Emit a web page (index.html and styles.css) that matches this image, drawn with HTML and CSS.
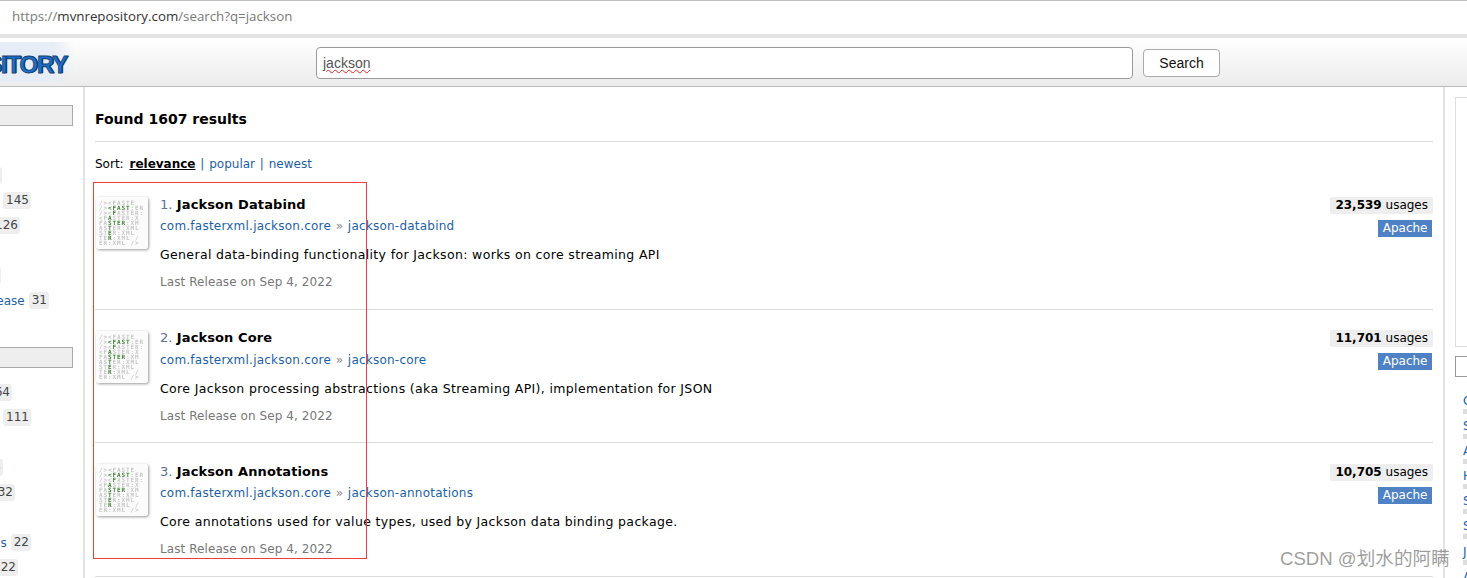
FILE: index.html
```html
<!DOCTYPE html>
<html lang="en">
<head>
<meta charset="utf-8">
<title>Search jackson</title>
<link rel="stylesheet" href="styles.css">
</head>
<body>
<svg class="defs" width="0" height="0" aria-hidden="true">
  <symbol id="fx" viewBox="0 0 52 52">
    <rect width="52" height="52" rx="3" fill="#fbfbfb"/>
    <g class="fx-text">
      <text x="3" y="8">  /&gt;&lt;FASTE</text>
      <text x="3" y="13">/&gt;<tspan class="fx-g">&lt;FAST</tspan>:ER</text>
      <text x="3" y="18">/&gt;&lt;<tspan class="fx-g">F</tspan>ASTER:</text>
      <text x="3" y="23"> &lt;F<tspan class="fx-g">A</tspan>STER:X</text>
      <text x="3" y="28"> FA<tspan class="fx-g">STER</tspan>:XM</text>
      <text x="3" y="33"> AS<tspan class="fx-g">T</tspan>ER:XML</text>
      <text x="3" y="38"> ST<tspan class="fx-g">E</tspan>R:XML</text>
      <text x="3" y="43"> TE<tspan class="fx-g">R</tspan>:XML /</text>
      <text x="3" y="48"> ER:XML /&gt;</text>
    </g>
  </symbol>
</svg>
<div class="urlbar"><span class="url-dim">https://</span><span class="url-host">mvnrepository.com</span><span class="url-dim">/search?q=jackson</span></div>
<header class="top">
  <div class="logo-wrap"><div class="logo-bg"><span class="logo">REPOSITORY</span></div></div>
  <div class="search">
    <div class="search-input"><span class="typo">jackson</span></div>
    <button class="search-btn" type="button">Search</button>
  </div>
</header>
<div class="page">
  <aside class="left">
    <div class="facet-head"></div>
    <div class="facet-rows">
      <div class="frow"></div>
      <div class="frow e2"><span class="badge"></span></div>
      <div class="frow e31"><span class="badge">145</span></div>
      <div class="frow e20"><span class="badge">126</span></div>
      <div class="frow"></div>
      <div class="frow e1"><span class="badge"></span></div>
      <div class="frow e49"><a class="flink">Release</a><span class="badge">31</span></div>
    </div>
    <div class="facet-head second"></div>
    <div class="facet-rows">
      <div class="frow e12"><span class="badge">64</span></div>
      <div class="frow e31"><span class="badge">111</span></div>
      <div class="frow"></div>
      <div class="frow e3"><span class="badge">65</span></div>
      <div class="frow e15"><span class="badge">32</span></div>
      <div class="frow"></div>
      <div class="frow e31"><a class="flink">Tools</a><span class="badge">22</span></div>
      <div class="frow e18"><span class="badge">22</span></div>
    </div>
  </aside>
  <main class="main">
    <h2 class="found">Found 1607 results</h2>
    <div class="sort">Sort: <a class="active">relevance</a> <span class="pipe">|</span> <a>popular</a> <span class="pipe">|</span> <a>newest</a></div>
    <div class="result">
      <svg class="icon" width="52" height="52"><use href="#fx"/></svg>
      <div class="info">
        <div class="title"><span class="num">1.</span> <b>Jackson Databind</b></div>
        <div class="coords"><a>com.fasterxml.jackson.core</a> <span class="sep">»</span> <a>jackson-databind</a></div>
        <div class="desc">General data-binding functionality for Jackson: works on core streaming API</div>
        <div class="date">Last Release on Sep 4, 2022</div>
      </div>
      <div class="meta"><span class="usage"><b>23,539</b> usages</span><span class="lic">Apache</span></div>
    </div>
    <div class="result">
      <svg class="icon" width="52" height="52"><use href="#fx"/></svg>
      <div class="info">
        <div class="title"><span class="num">2.</span> <b>Jackson Core</b></div>
        <div class="coords"><a>com.fasterxml.jackson.core</a> <span class="sep">»</span> <a>jackson-core</a></div>
        <div class="desc">Core Jackson processing abstractions (aka Streaming API), implementation for JSON</div>
        <div class="date">Last Release on Sep 4, 2022</div>
      </div>
      <div class="meta"><span class="usage"><b>11,701</b> usages</span><span class="lic">Apache</span></div>
    </div>
    <div class="result">
      <svg class="icon" width="52" height="52"><use href="#fx"/></svg>
      <div class="info">
        <div class="title"><span class="num">3.</span> <b>Jackson Annotations</b></div>
        <div class="coords"><a>com.fasterxml.jackson.core</a> <span class="sep">»</span> <a>jackson-annotations</a></div>
        <div class="desc">Core annotations used for value types, used by Jackson data binding package.</div>
        <div class="date">Last Release on Sep 4, 2022</div>
      </div>
      <div class="meta"><span class="usage"><b>10,705</b> usages</span><span class="lic">Apache</span></div>
    </div>
  </main>
  <aside class="right">
    <div class="ad"></div>
    <div class="rinput"></div>
    <ul class="rlist">
      <li><a>Core</a><i></i></li>
      <li><a>Spring</a><i></i></li>
      <li><a>Apache</a><i></i></li>
      <li><a>HTTP</a><i></i></li>
      <li><a>SLF4J</a><i></i></li>
      <li><a>Scala</a><i></i></li>
      <li><a>Jersey</a><i></i></li>
      <li><a>AWS</a><i></i></li>
    </ul>
  </aside>
</div>
<div class="redbox"></div>
<div class="watermark">CSDN @划水的阿瞒</div>
</body>
</html>
```
FILE: styles.css
```css
* { box-sizing: border-box; }
html, body { margin: 0; padding: 0; }
body {
  width: 1467px;
  height: 578px;
  overflow: hidden;
  position: relative;
  background: #fff;
  font-family: "DejaVu Sans", sans-serif;
  font-size: 12px;
  color: #000;
}
.defs { position: absolute; }
a { color: #1d5fa8; text-decoration: none; }

.urlbar {
  height: 38px;
  padding: 8px 0 0 12px;
  border-top: 1px solid #e6e6e6;
  border-bottom: 4px solid;
  border-image: linear-gradient(#bdbdbd 0 50%, #e4e4e4 50%) 1;
  font-family: "Open Sans", "Liberation Sans", sans-serif;
  font-size: 13.3px;
  line-height: 15px;
}
.url-dim { color: #7a7a7a; }
.url-host { color: #333; }

.top {
  height: 49px;
  display: flex;
  background: linear-gradient(#ffffff, #ececec);
  border-bottom: 1px solid #bcbcbc;
}
.logo-wrap {
  width: 316px;
  height: 48px;
  flex: none;
  overflow: hidden;
}
.logo-bg {
  width: 75px;
  height: 40px;
  margin-top: 4px;
  overflow: hidden;
  display: flex;
  align-items: center;
  justify-content: flex-end;
  padding: 5px 8px 0 0;
  background: linear-gradient(90deg, #e6edf6 70%, rgba(236, 240, 246, 0));
}
.logo {
  flex: none;
  font-family: "Liberation Sans", sans-serif;
  font-weight: bold;
  font-size: 24px;
  line-height: 28px;
  letter-spacing: -1.2px;
  color: #1c6fd0;
  -webkit-text-stroke: 0.9px #17406f;
  text-shadow: 1px 0 #16375e;
}
.search { display: flex; align-items: flex-start; padding-top: 9px; }
.search-input {
  width: 817px;
  height: 32px;
  border: 1px solid #9a9a9a;
  border-radius: 4px;
  background: #fff;
  padding: 7px 6px;
  font-family: "Liberation Sans", sans-serif;
  font-size: 14px;
  line-height: 16px;
  color: #555;
}
.typo { text-decoration: underline wavy #e22 1px; text-underline-offset: 1px; }
.search-btn {
  margin: 2px 0 0 10px;
  width: 77px;
  height: 28px;
  padding: 0;
  border: 1px solid #aaa;
  border-radius: 4px;
  background: #fff;
  font-family: "Liberation Sans", sans-serif;
  font-size: 14px;
  color: #111;
}

.page { display: flex; height: 491px; }
.left {
  width: 85px;
  flex: none;
  padding-top: 18px;
  border-right: 2px solid #e3e3e3;
  overflow: hidden;
}
.facet-head {
  width: 73px;
  height: 21px;
  background: #eee;
  border: 1px solid #aaa;
  border-left: 0;
}
.facet-head.second { margin-top: 34px; }
.facet-rows { display: flex; flex-direction: column; padding-top: 12px; }
.frow {
  height: 25px;
  display: flex;
  justify-content: flex-end;
  align-items: center;
  gap: 4px;
  white-space: nowrap;
}
.flink { color: #1d5fa8; }
.badge {
  flex: none;
  min-height: 17px;
  min-width: 20px;
  padding: 0 2px 0 3px;
  background: #eee;
  border-radius: 3px;
  color: #444;
  font-size: 12px;
  line-height: 17px;
}
.e1 { width: 1px; }
.e2 { width: 2px; }
.e3 { width: 3px; }
.e12 { width: 12px; }
.e15 { width: 15px; }
.e18 { width: 18px; }
.e20 { width: 20px; }
.e31 { width: 31px; }
.e49 { width: 49px; }

.main { width: 1358px; flex: none; padding: 0 10px 0 10px; }
.found {
  margin: 0;
  height: 55px;
  padding-top: 22px;
  border-bottom: 1px solid #ddd;
  font-size: 14px;
  line-height: 20px;
  font-weight: bold;
}
.sort { height: 34.4px; padding-top: 14px; line-height: 16px; word-spacing: 1px; }
.sort a { color: #1d5fa8; }
.sort .active { margin-left: 1px; color: #000; font-weight: bold; text-decoration: underline; }
.pipe { color: #1d5fa8; }

.result {
  height: 133.5px;
  display: flex;
  padding-top: 19.2px;
  border-bottom: 1px solid #ddd;
}
.icon {
  flex: none;
  margin: 1.5px 12px 0 1px;
  border-radius: 3px;
  box-shadow: 1px 1px 3px rgba(0, 0, 0, .4);
}
.fx-text {
  font-family: "DejaVu Sans Mono", monospace;
  font-size: 6px;
  font-weight: bold;
  fill: #c8c8c8;
  white-space: pre;
  letter-spacing: .9px;
  filter: blur(.5px);
}
.fx-g { fill: #3f8435; }
.info { flex: 1; }
.title { height: 21.5px; font-size: 13px; line-height: 18px; letter-spacing: .1px; }
.num { color: #5a6f9a; }
.coords { height: 29px; line-height: 18px; letter-spacing: .23px; word-spacing: .5px; }
.sep { color: #888; }
.desc { height: 27px; font-size: 12.5px; line-height: 18px; letter-spacing: .35px; }
.date { line-height: 18px; color: #777; letter-spacing: .08px; }
.meta { display: flex; flex-direction: column; align-items: flex-end; padding-top: 1.3px; }
.usage {
  height: 17px;
  padding: 0 5px;
  background: #eee;
  border-radius: 2px;
  line-height: 17px;
  font-size: 12px;
}
.lic {
  margin: 6px 1px 0 0;
  height: 17px;
  padding: 0 4.5px;
  background: #4e82c4;
  color: #fff;
  line-height: 17px;
}

.right {
  flex: 1;
  border-left: 2px solid #e3e3e3;
  padding: 10px 0 0 10px;
  overflow: hidden;
}
.ad { width: 40px; height: 250px; border: 1px solid #ddd; }
.rinput { width: 40px; height: 21px; margin-top: 9px; border: 1px solid #999; }
.rlist { list-style: none; margin: 0; padding: 16px 0 0 8px; }
.rlist li { height: 25.1px; line-height: 16px; white-space: nowrap; }
.rlist a { display: block; height: 16px; color: #1d5fa8; }
.rlist i { display: block; width: 4px; height: 5px; background: #ddd; }

.redbox {
  position: absolute;
  left: 93px;
  top: 182px;
  width: 274px;
  height: 377px;
  border: 1px solid #f23c3c;
}
.watermark {
  position: absolute;
  left: 1280px;
  top: 548px;
  font-family: "Liberation Sans", "Noto Sans CJK SC", sans-serif;
  font-size: 18.6px;
  line-height: 22px;
  color: rgba(90, 90, 90, .6);
  white-space: nowrap;
}
```
